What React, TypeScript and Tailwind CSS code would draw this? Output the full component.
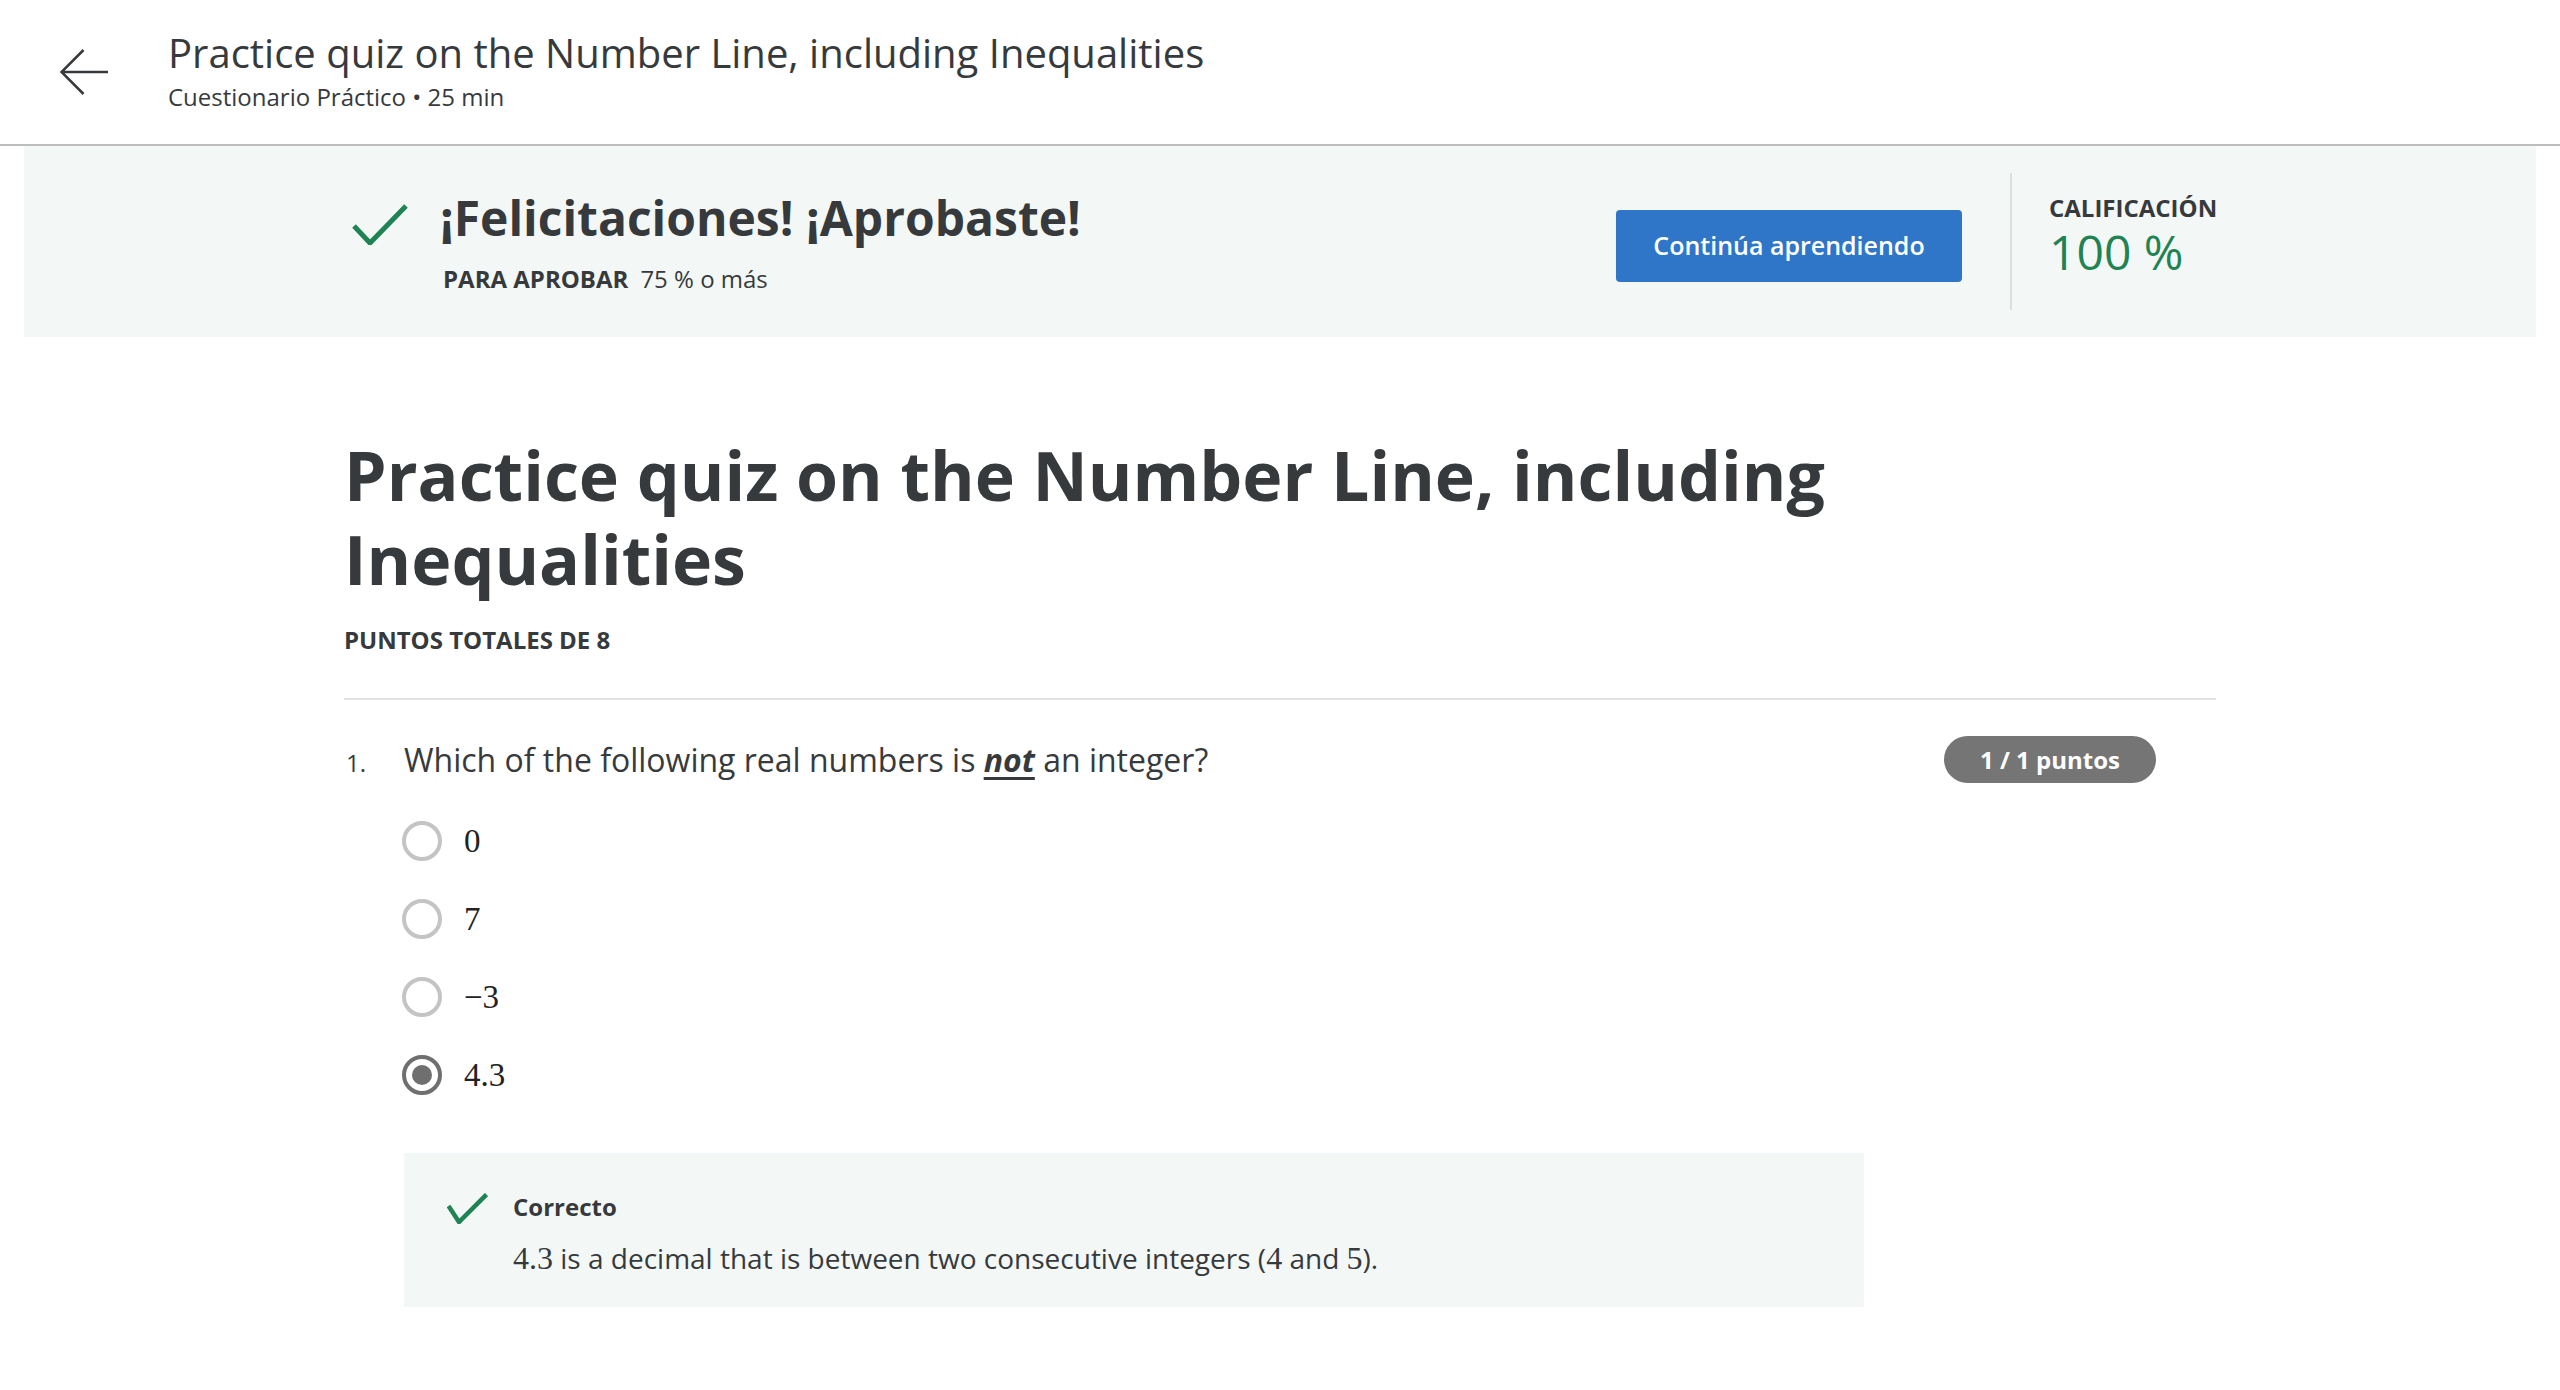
import React from "react";

const sans = { fontFamily: '"Open Sans", "Noto Sans", sans-serif' };

function Check({ className }: { className?: string }) {
  return (
    <svg viewBox="0 0 56 41" className={className} fill="none">
      <polyline points="2,22 18,39 54,2" stroke="#1f8354" strokeWidth="5" strokeLinecap="butt" strokeLinejoin="miter" />
    </svg>
  );
}

function SmallCheck() {
  return (
    <svg viewBox="0 0 41 31" className="w-[41px] h-[31px] mt-[2px] shrink-0" fill="none">
      <polyline points="1.5,13 12,29 39.5,1.5" stroke="#1f8354" strokeWidth="4.5" />
    </svg>
  );
}

function Radio({ selected }: { selected?: boolean }) {
  if (selected) {
    return (
      <span className="w-[40px] h-[40px] rounded-full border-[4px] border-[#6f6f6f] flex items-center justify-center shrink-0">
        <span className="w-[20px] h-[20px] rounded-full bg-[#6f6f6f]" />
      </span>
    );
  }
  return <span className="w-[40px] h-[40px] rounded-full border-[4px] border-[#c4c4c4] shrink-0" />;
}

const math = "font-['Liberation_Serif','DejaVu_Serif',serif]";

export default function App() {
  const options = ["0", "7", "\u22123", "4.3"];
  return (
    <div className="w-[2560px] min-h-[1390px] bg-white text-[#373a3c]" style={sans}>
      {/* Header */}
      <header className="h-[146px] border-b-2 border-[#bdbdbd] flex items-center pl-[60px]">
        <svg viewBox="0 0 48 46" className="w-[48px] h-[46px] shrink-0" fill="none">
          <path d="M1.5 23 H48 M23.5 1 L1.5 23 L23.5 45" stroke="#373a3c" strokeWidth="2.5" />
        </svg>
        <div className="ml-[60px] flex flex-col gap-[4px] mt-[-2px]">
          <div className="text-[40px] leading-[48px] text-[#373a3c]">
            Practice quiz on the Number Line, including Inequalities
          </div>
          <div className="text-[24px] leading-[32px] text-[#373a3c]">Cuestionario Práctico • 25 min</div>
        </div>
      </header>

      {/* Banner */}
      <div className="mx-[24px] h-[191px] bg-[#f3f8f6] flex items-center">
        <div className="w-[1872px] mx-auto flex items-center">
          <div className="flex-1 flex items-start pl-[8px]">
            <Check className="w-[56px] h-[41px] mt-[16px] shrink-0" />
            <div className="ml-[32px] flex flex-col gap-[15px]">
              <div className="text-[48px] leading-[60px] font-bold text-[#373a3c]">¡Felicitaciones! ¡Aprobaste!</div>
              <div className="text-[24px] leading-[32px] text-[#373a3c] pl-[3px]">
                <span className="font-bold">PARA APROBAR</span>
                <span className="ml-[12px]">75 % o más</span>
              </div>
            </div>
          </div>
          <button className="w-[346px] h-[72px] mt-[9px] bg-[#2f76c9] rounded-[4px] text-white text-[25px] font-semibold flex items-center justify-center">
            Continúa aprendiendo
          </button>
          <div className="w-[2px] h-[137px] bg-[#dcdfde] ml-[48px] mr-[37px]" />
          <div className="w-[167px] flex flex-col mb-[12px]">
            <div className="text-[24px] leading-[32px] font-bold text-[#373a3c]">CALIFICACIÓN</div>
            <div className="text-[48px] leading-[56px] text-[#1f8354]">100 %</div>
          </div>
        </div>
      </div>

      {/* Main */}
      <main className="w-[1872px] mx-auto pt-[96px]">
        <h1 className="text-[68px] leading-[84px] font-bold text-[#373a3c] max-w-[1600px]">
          Practice quiz on the Number Line, including Inequalities
        </h1>
        <div className="mt-[23px] text-[24px] leading-[32px] font-bold text-[#373a3c]">PUNTOS TOTALES DE 8</div>
        <div className="mt-[42px] h-[2px] bg-[#e1e1e1]" />

        <div className="mt-[38px] flex items-start pr-[60px]">
          <div className="flex-1">
            <div className="flex items-baseline">
              <span className="w-[60px] pl-[2px] text-[24px] text-[#373a3c]">1.</span>
              <span className="text-[32px] leading-[44px] text-[#373a3c]">
                Which of the following real numbers is{" "}
                <span className="font-bold italic underline underline-offset-[5px]">not</span> an integer?
              </span>
            </div>
            <div className="mt-[39px] ml-[58px] flex flex-col gap-[38px]">
              {options.map((o, i) => (
                <div key={o} className="flex items-center h-[40px]">
                  <Radio selected={i === 3} />
                  <span className={`ml-[22px] text-[33px] leading-[40px] text-[#222] ${math}`}>{o}</span>
                </div>
              ))}
            </div>
          </div>
          <div className="mt-[-2px] w-[212px] h-[47px] rounded-full bg-[#757575] text-white text-[24px] font-bold flex items-center justify-center">
            1 / 1 puntos
          </div>
        </div>

        <div className="mt-[58px] ml-[60px] w-[1460px] bg-[#f3f8f6] pt-[38px] pb-[30px] pl-[43px] flex items-start">
          <SmallCheck />
          <div className="ml-[25px] flex flex-col gap-[16px]">
            <div className="text-[24px] leading-[32px] font-bold text-[#373a3c]">Correcto</div>
            <div className="text-[28px] leading-[38px] text-[#373a3c]">
              <span className={`${math} text-[32px]`}>4.3</span> is a decimal that is between two consecutive integers (
              <span className={`${math} text-[32px]`}>4</span> and <span className={`${math} text-[32px]`}>5</span>).
            </div>
          </div>
        </div>
      </main>
    </div>
  );
}
